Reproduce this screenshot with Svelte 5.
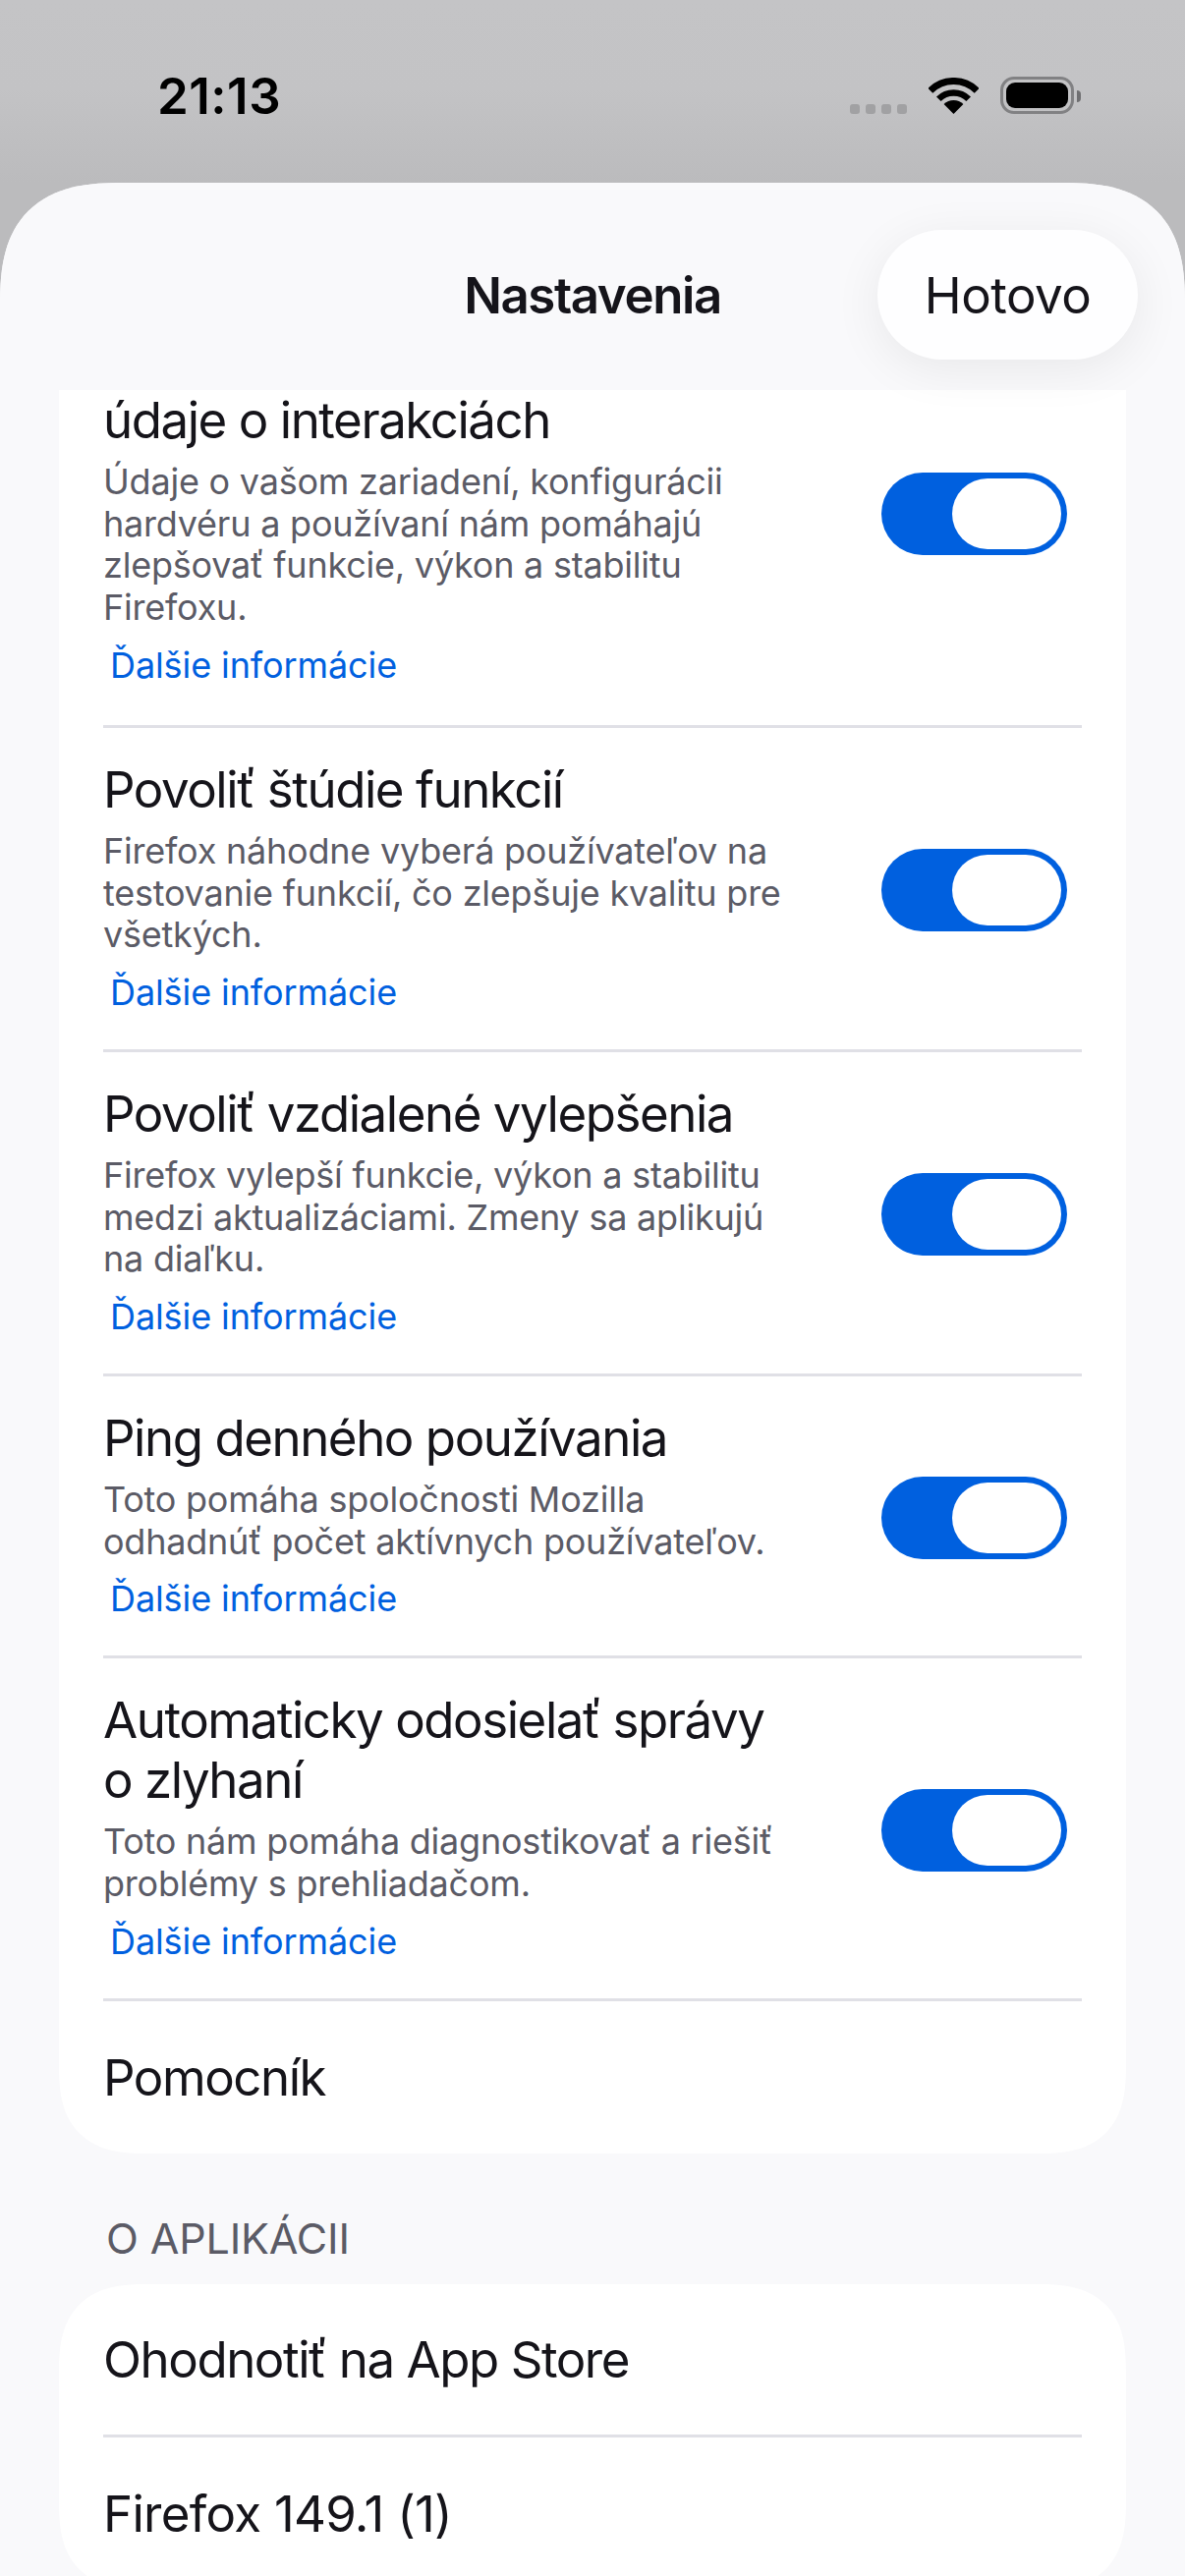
<script>
  const rows = [
    { title: ['', 'údaje o interakciách'], sub: ['Údaje o vašom zariadení, konfigurácii', 'hardvéru a používaní nám pomáhajú', 'zlepšovať funkcie, výkon a stabilitu', 'Firefoxu.'] },
    { title: ['Povoliť štúdie funkcií'], sub: ['Firefox náhodne vyberá používateľov na', 'testovanie funkcií, čo zlepšuje kvalitu pre', 'všetkých.'] },
    { title: ['Povoliť vzdialené vylepšenia'], sub: ['Firefox vylepší funkcie, výkon a stabilitu', 'medzi aktualizáciami. Zmeny sa aplikujú', 'na diaľku.'] },
    { title: ['Ping denného používania'], sub: ['Toto pomáha spoločnosti Mozilla', 'odhadnúť počet aktívnych používateľov.'] },
    { title: ['Automaticky odosielať správy', 'o zlyhaní'], sub: ['Toto nám pomáha diagnostikovať a riešiť', 'problémy s prehliadačom.'] }
  ];
</script>

<div class="page">
  <div class="status">
    <span class="time">21:13</span>
    <div class="icons">
      <div class="dots"><i></i><i></i><i></i><i></i></div>
      <svg class="wifi" width="51" height="37" viewBox="0 0 51 37" aria-hidden="true">
        <path d="M1.8 13.3A33.5 33.5 0 0 1 49.2 13.3" fill="none" stroke="#000" stroke-width="7" />
        <path d="M10.3 21.8A21.5 21.5 0 0 1 40.7 21.8" fill="none" stroke="#000" stroke-width="6.5" />
        <path d="M25.5 37L15.6 27.1A14 14 0 0 1 35.4 27.1Z" fill="#000" />
      </svg>
      <div class="battery"><div class="charge"></div></div>
      <div class="nub"></div>
    </div>
  </div>

  <div class="sheet">
    <header class="nav">
      <h1>Nastavenia</h1>
      <button class="done">Hotovo</button>
    </header>

    <div class="viewport">
      <section class="card first">
        {#each rows as row}
          <div class="row">
            <div class="text">
              <div class="title">
                {#each row.title as line}<div class="tline">{line || '\u00a0'}</div>{/each}
              </div>
              <div class="sub">
                {#each row.sub as line}<div>{line}</div>{/each}
              </div>
              <div class="link">Ďalšie informácie</div>
            </div>
            <div class="toggle"><div class="knob"></div></div>
          </div>
        {/each}
        <div class="row plain last"><div class="title">Pomocník</div></div>
      </section>

      <div class="heading">O APLIKÁCII</div>

      <section class="card">
        <div class="row plain"><div class="title">Ohodnotiť na App Store</div></div>
        <div class="row plain last"><div class="title version">Firefox 149.1 (1)</div></div>
      </section>
    </div>
  </div>
</div>

<style>
  :global(body) {
    margin: 0;
    background: #f9f9fb;
  }
  .page {
    width: 1206px;
    height: 2622px;
    overflow: hidden;
    display: flex;
    flex-direction: column;
    background: linear-gradient(#c4c4c6 0, #c3c3c5 90px, #bbbbbd 186px, #bbbbbd 400px);
    font-family: Inter, "Liberation Sans", sans-serif;
    color: #15141a;
  }
  .status {
    height: 186px;
    flex: none;
    box-sizing: border-box;
    display: flex;
    justify-content: space-between;
    align-items: flex-start;
    padding: 68px 106px 0 160px;
  }
  .time {
    font-size: 51px;
    line-height: 60px;
    font-weight: 600;
    color: #000;
    letter-spacing: 0.5px;
  }
  .icons {
    display: flex;
    align-items: flex-start;
    padding-top: 10px;
  }
  .dots {
    display: flex;
    gap: 6px;
    margin-top: 28px;
    margin-right: 22px;
  }
  .dots i {
    width: 10px;
    height: 10px;
    border-radius: 3px;
    background: #a1a1a3;
  }
  .wifi {
    margin-top: 1px;
    margin-right: 22px;
  }
  .battery {
    box-sizing: border-box;
    width: 75px;
    height: 38px;
    padding: 3px;
    border: 3px solid #818183;
    border-radius: 14px;
  }
  .charge {
    width: 100%;
    height: 100%;
    background: #000;
    border-radius: 9px;
  }
  .nub {
    width: 4px;
    height: 12px;
    margin: 14px 0 0 3px;
    background: #6f6f71;
    border-radius: 0 4px 4px 0;
  }
  .sheet {
    flex: 1;
    min-height: 0;
    display: flex;
    flex-direction: column;
    background: #f9f9fb;
    border-radius: 125px 125px 0 0;
    corner-shape: superellipse(1.4);
    overflow: hidden;
  }
  .nav {
    position: relative;
    z-index: 1;
    flex: none;
    height: 211px;
    background: #f9f9fb;
  }
  h1 {
    margin: 0;
    padding-top: 84px;
    text-align: center;
    font-size: 51px;
    line-height: 62px;
    font-weight: 600;
    letter-spacing: -1.4px;
  }
  .done {
    position: absolute;
    left: 893px;
    top: 48px;
    width: 265px;
    height: 132px;
    padding: 0;
    border: 0;
    border-radius: 66px;
    background: #fefeff;
    box-shadow: 0 10px 50px rgba(0, 0, 0, 0.07);
    font: inherit;
    font-size: 51px;
    letter-spacing: -0.5px;
    color: #15141a;
  }
  .viewport {
    flex: 1;
    min-height: 0;
    overflow: hidden;
    padding: 0 60px;
  }
  .card {
    background: #fff;
    border-radius: 90px;
    corner-shape: superellipse(1.4);
    padding: 0 45px;
  }
  .first {
    margin-top: -94px;
  }
  .row {
    box-sizing: border-box;
    display: flex;
    justify-content: space-between;
    align-items: center;
    border-bottom: 3px solid #e0e0e6;
  }
  .row.last {
    border-bottom: 0;
  }
  .text {
    width: 720px;
    padding: 32px 0 36px;
  }
  .row:first-child .text {
    padding: 33px 0 39px;
  }
  .title {
    font-size: 51px;
    line-height: 61px;
    letter-spacing: -1.45px;
  }
  .version {
    letter-spacing: -0.7px;
  }
  .sub {
    margin-top: 11px;
    font-size: 36px;
    line-height: 42.7px;
    letter-spacing: -0.22px;
    color: #5b5b66;
  }
  .link {
    margin-top: 15px;
    padding-left: 7px;
    font-size: 36px;
    line-height: 44px;
    letter-spacing: -0.1px;
    color: #0060df;
  }
  .toggle {
    box-sizing: border-box;
    flex: none;
    width: 189px;
    height: 84px;
    margin: 4px 15px 0 0;
    padding: 6px;
    border-radius: 42px;
    background: #0060df;
    display: flex;
    justify-content: flex-end;
  }
  .row:first-child .toggle {
    margin-top: 6px;
  }
  .knob {
    width: 111px;
    height: 72px;
    border-radius: 36px;
    background: #fff;
  }
  .plain {
    height: 156px;
  }
  .plain.last {
    height: 155px;
  }
  .heading {
    height: 133px;
    box-sizing: border-box;
    padding: 60px 0 0 48px;
    font-size: 43px;
    line-height: 52px;
    letter-spacing: -0.15px;
    color: #5b5b66;
  }
</style>
